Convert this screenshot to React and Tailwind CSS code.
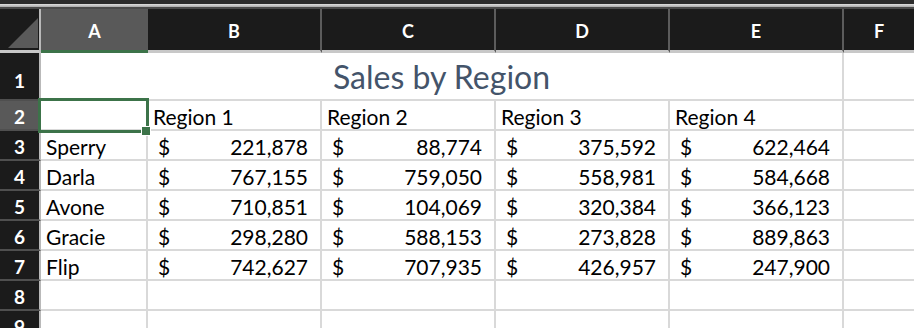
import React from "react";

const data = [
  ["Sperry", "221,878", "88,774", "375,592", "622,464"],
  ["Darla", "767,155", "759,050", "558,981", "584,668"],
  ["Avone", "710,851", "104,069", "320,384", "366,123"],
  ["Gracie", "298,280", "588,153", "273,828", "889,863"],
  ["Flip", "742,627", "707,935", "426,957", "247,900"],
];

const font = { fontFamily: "Lato, 'Open Sans', sans-serif" };

function RowHead({ n, sel, h = "h-[30px]", pb = "pb-[3px]" }) {
  return (
    <div
      className={`${h} w-[41px] shrink-0 flex items-end justify-center ${pb} border-r-2 border-r-[#b9b9b9] border-b-2 border-b-[#4f4f4f] text-white font-bold text-[19px] leading-none ${
        sel ? "bg-[#595959]" : "bg-[#1b1b1b]"
      }`}
    >
      {n}
    </div>
  );
}

function Cell({ w, children, className = "" }) {
  return (
    <div
      className={`${w} h-[30px] shrink-0 border-r-2 border-b-2 border-[#d9d9d9] bg-white flex items-end text-[21px] leading-[1.2] text-black ${className}`}
    >
      {children}
    </div>
  );
}

function Money({ v }) {
  return (
    <Cell w="w-[174px]" className="justify-between pl-[10px] pr-[12px]">
      <span>$</span>
      <span>{v}</span>
    </Cell>
  );
}

export default function App() {
  const colHeads = ["B", "C", "D", "E"];
  return (
    <div className="w-[914px] h-[328px] overflow-hidden bg-white" style={font}>
      {/* top chrome */}
      <div className="h-[4px] bg-[#2b2b2b]" />
      <div className="h-[3px] bg-gradient-to-b from-[#e0e0e0] to-[#a8a8a8]" />
      <div className="h-[2px] bg-[#4a4a4a]" />
      {/* column header row */}
      <div className="flex h-[44px]">
        <div className="w-[41px] shrink-0 bg-[#1b1b1b] border-r-2 border-r-[#b9b9b9] border-b-[3px] border-b-[#c8c8c8] flex items-end justify-end pr-[1px] pb-[2px]">
          <svg width="30" height="30" viewBox="0 0 30 30">
            <polygon points="0,30 30,0 30,30" fill="#5a5a5a" />
          </svg>
        </div>
        <div className="w-[107px] shrink-0 bg-[#595959] border-b-[3px] border-b-[#3c7349] flex items-center justify-center text-white font-bold text-[18px] pt-[3px]">
          A
        </div>
        {colHeads.map((c) => (
          <div
            key={c}
            className="w-[174px] shrink-0 bg-[#1b1b1b] border-r-2 border-r-[#5c5c5c] border-b-[3px] border-b-[#c8c8c8] flex items-center justify-center text-white font-bold text-[18px] pt-[3px]"
          >
            {c}
          </div>
        ))}
        <div className="flex-1 bg-[#1b1b1b] border-b-[3px] border-b-[#c8c8c8] flex items-center justify-center text-white font-bold text-[18px] pt-[3px]">
          F
        </div>
      </div>
      {/* row 1 */}
      <div className="flex h-[48px]">
        <RowHead n="1" h="h-[48px]" pb="pb-[9px]" />
        <div className="w-[803px] shrink-0 h-[48px] border-r-2 border-b-2 border-[#d9d9d9] flex items-end justify-center pb-[3px] text-[32px] leading-[1.2] text-[#44546a]">
          Sales by Region
        </div>
        <div className="flex-1 h-[48px] border-b-2 border-[#d9d9d9]" />
      </div>
      {/* row 2 */}
      <div className="flex h-[30px]">
        <RowHead n="2" sel />
        <div className="relative w-[107px] h-[30px] shrink-0 border-r-2 border-b-2 border-[#d9d9d9]">
          <div className="absolute left-[-3px] top-[-3px] w-[111px] h-[35px] border-[3px] border-[#3c7349] z-10" />
          <div className="absolute left-[100px] top-[25px] w-[10px] h-[10px] bg-[#3c7349] border border-white z-20" />
        </div>
        {["Region 1", "Region 2", "Region 3", "Region 4"].map((r) => (
          <Cell key={r} w="w-[174px]" className="pl-[5px]">
            {r}
          </Cell>
        ))}
        <div className="flex-1 h-[30px] border-b-2 border-[#d9d9d9]" />
      </div>
      {/* data rows */}
      {data.map((row, i) => (
        <div key={row[0]} className="flex h-[30px]">
          <RowHead n={String(i + 3)} />
          <Cell w="w-[107px]" className="pl-[5px]">
            {row[0]}
          </Cell>
          {row.slice(1).map((v, j) => (
            <Money key={j} v={v} />
          ))}
          <div className="flex-1 h-[30px] border-b-2 border-[#d9d9d9]" />
        </div>
      ))}
      {/* empty rows */}
      {["8", "9"].map((n) => (
        <div key={n} className="flex h-[30px]">
          <RowHead n={n} />
          <Cell w="w-[107px]" />
          <Cell w="w-[174px]" />
          <Cell w="w-[174px]" />
          <Cell w="w-[174px]" />
          <Cell w="w-[174px]" />
          <div className="flex-1 h-[30px] border-b-2 border-[#d9d9d9]" />
        </div>
      ))}
    </div>
  );
}
